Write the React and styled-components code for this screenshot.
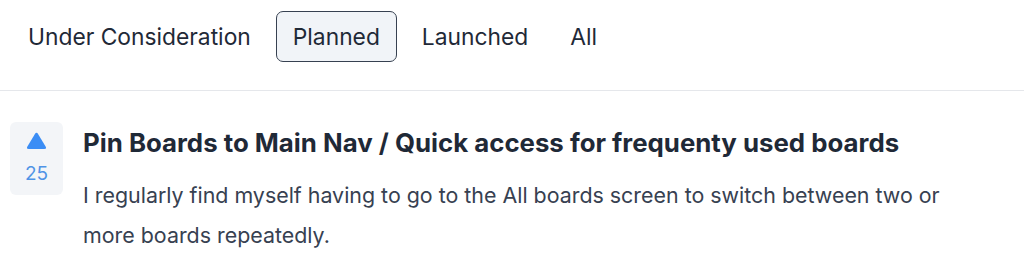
import React, { useState } from 'react'
import styled, { createGlobalStyle } from 'styled-components'

const tabs = ['Under Consideration', 'Planned', 'Launched', 'All']

const App = () => {
	const [active, setActive] = useState('Planned')
	return (
		<Page>
			<GlobalStyle />
			<TabBar>
				{tabs.map(tab => (
					<Tab key={tab} active={tab === active} onClick={() => setActive(tab)}>
						{tab}
					</Tab>
				))}
			</TabBar>
			<Post>
				<Vote>
					<svg width="21" height="18" viewBox="0 0 21 18">
						<path
							d="M8.8 2.2 Q10.5 -0.6 12.2 2.2 L19.6 14.6 Q21 17 18.2 17 L2.8 17 Q0 17 1.4 14.6 Z"
							fill="#3b8df5"
						/>
					</svg>
					<Count>25</Count>
				</Vote>
				<Body>
					<Title>Pin Boards to Main Nav / Quick access for frequenty used boards</Title>
					<Text>
						I regularly find myself having to go to the All boards screen to switch between two or
						more boards repeatedly.
					</Text>
				</Body>
			</Post>
		</Page>
	)
}

const GlobalStyle = createGlobalStyle`
	body {
		margin: 0;
		background: #fff;
		font-family: Inter, 'Noto Sans', sans-serif;
	}
`
const Page = styled.div`
	width: 1024px;
	height: 272px;
	overflow: hidden;
	background: #fff;
`
const TabBar = styled.div`
	display: flex;
	gap: 8px;
	padding: 11px 0 28px 11px;
	border-bottom: 1px solid #e5e7eb;
`
const Tab = styled.button`
	height: 51px;
	padding: 0 16px;
	border: 1px solid ${props => (props.active ? '#374151' : 'transparent')};
	border-radius: 7px;
	background: ${props => (props.active ? '#f1f4f8' : 'transparent')};
	font-family: Inter, 'Noto Sans', sans-serif;
	font-size: 22.8px;
	color: #1f2937;
	cursor: pointer;
`
const Post = styled.div`
	display: flex;
	gap: 20px;
	padding: 31px 10px 0;
`
const Vote = styled.div`
	display: flex;
	flex-direction: column;
	align-items: center;
	flex-shrink: 0;
	width: 53px;
	height: 73px;
	padding-top: 10px;
	box-sizing: border-box;
	background: #f3f5f8;
	border-radius: 6px;
`
const Count = styled.div`
	margin-top: 13px;
	font-size: 19px;
	line-height: 22px;
	color: #4f93e6;
`
const Body = styled.div`
	padding-top: 4px;
`
const Title = styled.h2`
	margin: 0;
	font-size: 25.8px;
	font-weight: 650;
	line-height: 34px;
	color: #1f2937;
`
const Text = styled.p`
	max-width: 880px;
	margin: 15px 0 0;
	font-size: 21.4px;
	line-height: 40px;
	color: #374151;
`

export default App
